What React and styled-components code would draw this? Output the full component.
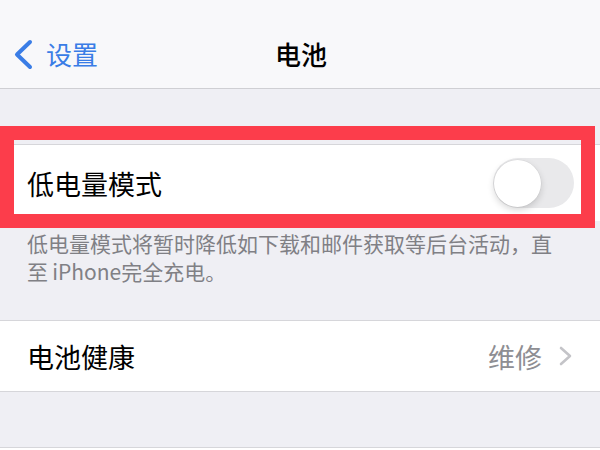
import React from "react";
import styled, { createGlobalStyle } from "styled-components";

const Global = createGlobalStyle`
  html, body { margin: 0; padding: 0; background: #efeff4; }
  body { font-family: "Noto Sans CJK SC", "Noto Sans", sans-serif; }
`;

const Screen = styled.div`
  position: relative;
  width: 600px;
  height: 450px;
  overflow: hidden;
  background: #efeff4;
  font-family: "Noto Sans CJK SC", "Noto Sans", sans-serif;
`;

const NavBar = styled.header`
  box-sizing: border-box;
  height: 89px;
  padding-top: 20px;
  background: #f8f8fa;
  border-bottom: 1px solid #cfcfd3;
  display: grid;
  grid-template-columns: 1fr auto 1fr;
  align-items: center;
`;

const BackButton = styled.div`
  display: flex;
  align-items: center;
  gap: 13px;
  padding-left: 14px;
  color: #3a7de6;
  font-size: 26px;
  line-height: 1;
`;

const Title = styled.div`
  font-size: 26px;
  font-weight: 500;
  color: #000;
  line-height: 1;
  padding-left: 2px;
`;

const Group = styled.section`
  margin-top: ${(p) => p.$gap}px;
  background: #fff;
  border-top: 1px solid #d6d6da;
  border-bottom: ${(p) => (p.$open ? "none" : "1px solid #d6d6da")};
`;

const Row = styled.div`
  box-sizing: border-box;
  height: ${(p) => p.$h}px;
  display: flex;
  align-items: center;
  padding: 0 28px 0 27px;
`;

const Label = styled.span`
  flex: 1;
  font-size: 27px;
  color: #000;
  line-height: 1;
`;

const Value = styled.span`
  font-size: 27px;
  color: #8e8e93;
  line-height: 1;
  margin-right: 17px;
`;

const Footer = styled.p`
  margin: 0;
  padding: 8px 40px 0 27px;
  font-size: 21px;
  line-height: 28px;
  color: #808085;
`;

const Track = styled.div`
  position: relative;
  width: 81px;
  height: 50px;
  border-radius: 25px;
  background: #e9e9eb;
  margin-right: -2px;
`;

const Knob = styled.div`
  position: absolute;
  top: 1.5px;
  left: 1px;
  width: 47px;
  height: 47px;
  border-radius: 50%;
  background: #fff;
  box-shadow: 0 3px 7px rgba(0, 0, 0, 0.16), 0 0 0 0.5px rgba(0, 0, 0, 0.06);
`;

const Highlight = styled.div`
  position: absolute;
  left: 0;
  top: 126px;
  width: 595px;
  height: 102px;
  box-sizing: border-box;
  border: 14px solid #fc3d4b;
  pointer-events: none;
`;

const Chevron = ({ color, w, h, sw }) => (
  <svg width={w} height={h} viewBox={`0 0 ${w} ${h}`} fill="none">
    <polyline
      points={`${w - sw / 2 - 1},${sw / 2 + 1} ${sw / 2 + 1},${h / 2} ${w - sw / 2 - 1},${h - sw / 2 - 1}`}
      stroke={color}
      strokeWidth={sw}
      strokeLinecap="round"
      strokeLinejoin="round"
    />
  </svg>
);

const Disclosure = () => (
  <svg width="13" height="20" viewBox="0 0 13 20" fill="none">
    <polyline
      points="2,2 11,10 2,18"
      stroke="#c4c4c8"
      strokeWidth="2.6"
      strokeLinecap="round"
      strokeLinejoin="round"
    />
  </svg>
);

export default function App() {
  return (
    <Screen>
      <Global />
      <NavBar>
        <BackButton>
          <Chevron color="#3a7de6" w={19} h={31} sw={4} />
          <span>设置</span>
        </BackButton>
        <Title>电池</Title>
        <div />
      </NavBar>

      <Group $gap={55} $open>
        <Row $h={76}>
          <Label>低电量模式</Label>
          <Track>
            <Knob />
          </Track>
        </Row>
      </Group>
      <Footer>
        {"低电量模式将暂时降低如下载和邮件获取等后台活动，直至\u2009iPhone完全充电。"}
      </Footer>

      <Group $gap={35}>
        <Row $h={70}>
          <Label>电池健康</Label>
          <Value>维修</Value>
          <Disclosure />
        </Row>
      </Group>

      <Group $gap={55}>
        <Row $h={20} />
      </Group>

      <Highlight />
    </Screen>
  );
}
